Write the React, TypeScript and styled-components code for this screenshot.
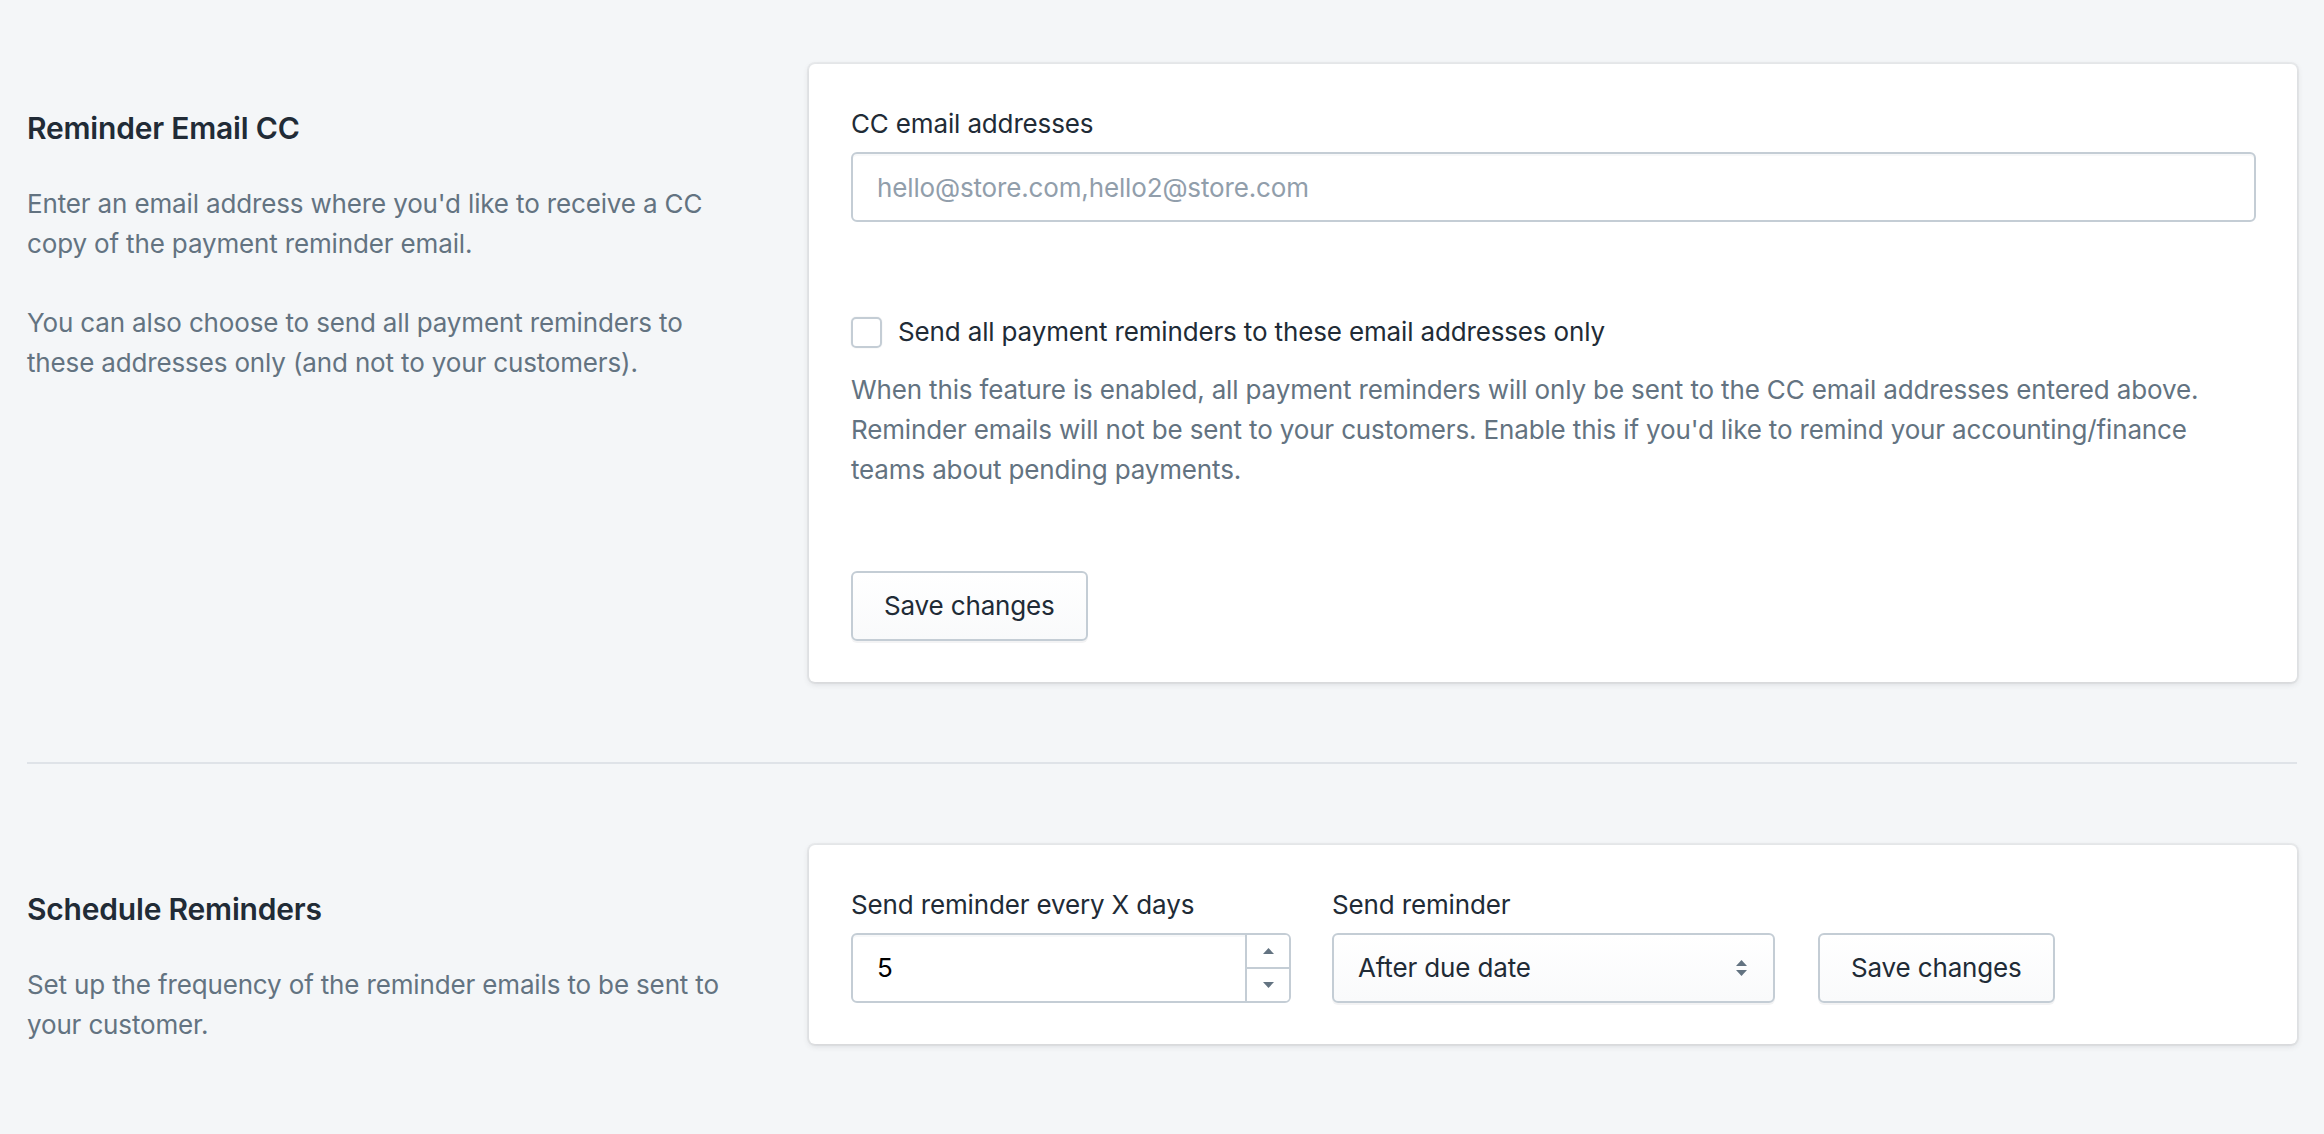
import React from "react";
import styled, { createGlobalStyle } from "styled-components";

const GlobalStyle = createGlobalStyle`
  html, body {
    margin: 0;
    padding: 0;
    background: #f4f6f8;
  }
  body {
    font-family: Inter, "Noto Sans", sans-serif;
    color: #212b36;
    -webkit-font-smoothing: antialiased;
  }
  * { box-sizing: border-box; }
`;

const bodyText = `
  font-size: 26px;
  line-height: 40px;
  letter-spacing: -0.15px;
`;

const Page = styled.div`
  padding: 64px 27px 40px;
  min-height: 1134px;
`;

const Section = styled.section`
  display: grid;
  grid-template-columns: 742px 1fr;
  column-gap: 40px;
  align-items: start;
`;

const Annotation = styled.div`
  padding: 41px 30px 0 0;
`;

const Heading = styled.h2`
  margin: 0;
  font-size: 30px;
  line-height: 47px;
  font-weight: 600;
  color: #212b36;
  letter-spacing: -0.2px;
`;

const Description = styled.p`
  margin: 32px 0 0;
  ${bodyText}
  color: #637381;
  & + & {
    margin-top: 39px;
  }
`;

const Card = styled.div`
  background: #fff;
  border-radius: 6px;
  box-shadow: 0 0 0 2px rgba(63, 63, 68, 0.05), 0 2px 6px 0 rgba(63, 63, 68, 0.15);
  padding: 40px 41px 41px 42px;
`;

const Label = styled.label`
  display: block;
  ${bodyText}
  color: #212b36;
  margin-bottom: 8px;
`;

const TextInput = styled.input`
  display: block;
  width: 100%;
  height: 70px;
  border: 2px solid #c4cdd5;
  border-radius: 6px;
  padding: 0 24px;
  font-family: inherit;
  ${bodyText}
  color: #000;
  background: #fff;
  box-shadow: inset 0 2px 0 0 rgba(99, 115, 129, 0.05);
  outline: none;
  &::placeholder {
    color: #919eab;
  }
`;

const CheckRow = styled.label`
  display: flex;
  align-items: center;
  gap: 16px;
  margin-top: 90px;
  ${bodyText}
  color: #212b36;
`;

const CheckBox = styled.span`
  width: 31px;
  height: 31px;
  border: 2px solid #c4cdd5;
  border-radius: 5px;
  background: #fff;
  box-shadow: 0 0 0 1px rgba(0, 0, 0, 0.02);
  flex: none;
`;

const HelpText = styled.p`
  margin: 18px 0 0;
  ${bodyText}
  color: #637381;
`;

const Button = styled.button<{ $mt?: number }>`
  display: inline-flex;
  align-items: center;
  justify-content: center;
  height: 70px;
  padding: 0 31px;
  margin-top: ${(p) => p.$mt ?? 0}px;
  border: 2px solid #c4cdd5;
  border-radius: 6px;
  background: linear-gradient(180deg, #fff, #f9fafb);
  box-shadow: 0 2px 0 0 rgba(22, 29, 37, 0.05);
  font-family: inherit;
  ${bodyText}
  color: #212b36;
  flex: none;
`;

const Divider = styled.hr`
  margin: 80px 0 81px;
  border: 0;
  height: 2px;
  background: #dfe3e8;
`;

const FieldRow = styled.div`
  display: flex;
  align-items: flex-end;
  gap: 41px;
`;

const Field = styled.div<{ $w: number }>`
  width: ${(p) => p.$w}px;
  flex: none;
`;

const NumberBox = styled.div`
  display: flex;
  height: 70px;
  border: 2px solid #c4cdd5;
  border-radius: 6px;
  background: #fff;
  overflow: hidden;
  box-shadow: inset 0 2px 0 0 rgba(99, 115, 129, 0.05);
`;

const NumberValue = styled.div`
  flex: 1;
  display: flex;
  align-items: center;
  padding-left: 24px;
  ${bodyText}
  color: #000;
`;

const Spinner = styled.div`
  width: 44px;
  border-left: 2px solid #c4cdd5;
  display: flex;
  flex-direction: column;
`;

const SpinPart = styled.div<{ $top?: boolean }>`
  flex: 1;
  display: flex;
  align-items: center;
  justify-content: center;
  background: #fff;
  ${(p) => (p.$top ? "border-bottom: 2px solid #c4cdd5;" : "")}
`;

const SelectBox = styled.div`
  display: flex;
  align-items: center;
  justify-content: space-between;
  height: 70px;
  padding: 0 26px 0 24px;
  border: 2px solid #c4cdd5;
  border-radius: 6px;
  background: linear-gradient(180deg, #fff, #f9fafb);
  box-shadow: 0 2px 0 0 rgba(22, 29, 37, 0.05);
  ${bodyText}
  color: #212b36;
`;

const ButtonWrap = styled.div`
  margin-left: 2px;
`;

const Tri = ({ up }: { up?: boolean }) => (
  <svg width="11" height="6" viewBox="0 0 11 6">
    <path d={up ? "M0 6 L5.5 0 L11 6 Z" : "M0 0 L5.5 6 L11 0 Z"} fill="#637381" />
  </svg>
);

const CaretUpDown = () => (
  <svg width="11" height="18" viewBox="0 0 11 18">
    <path d="M0 7 L5.5 1 L11 7 Z" fill="#637381" />
    <path d="M0 11 L5.5 17 L11 11 Z" fill="#637381" />
  </svg>
);

export default function App() {
  return (
    <>
      <GlobalStyle />
      <Page>
        <Section>
          <Annotation>
            <Heading>Reminder Email CC</Heading>
            <Description>
              Enter an email address where you'd like to receive a CC copy of the payment reminder email.
            </Description>
            <Description>
              You can also choose to send all payment reminders to these addresses only (and not to your customers).
            </Description>
          </Annotation>
          <Card>
            <Label>CC email addresses</Label>
            <TextInput placeholder="hello@store.com,hello2@store.com" />
            <CheckRow>
              <CheckBox />
              Send all payment reminders to these email addresses only
            </CheckRow>
            <HelpText>
              When this feature is enabled, all payment reminders will only be sent to the CC email addresses entered above.
              Reminder emails will not be sent to your customers. Enable this if you'd like to remind your accounting/finance
              teams about pending payments.
            </HelpText>
            <Button $mt={81}>Save changes</Button>
          </Card>
        </Section>
        <Divider />
        <Section>
          <Annotation>
            <Heading>Schedule Reminders</Heading>
            <Description>Set up the frequency of the reminder emails to be sent to your customer.</Description>
          </Annotation>
          <Card>
            <FieldRow>
              <Field $w={440}>
                <Label>Send reminder every X days</Label>
                <NumberBox>
                  <NumberValue>5</NumberValue>
                  <Spinner>
                    <SpinPart $top>
                      <Tri up />
                    </SpinPart>
                    <SpinPart>
                      <Tri />
                    </SpinPart>
                  </Spinner>
                </NumberBox>
              </Field>
              <Field $w={443}>
                <Label>Send reminder</Label>
                <SelectBox>
                  <span>After due date</span>
                  <CaretUpDown />
                </SelectBox>
              </Field>
              <ButtonWrap>
                <Button>Save changes</Button>
              </ButtonWrap>
            </FieldRow>
          </Card>
        </Section>
      </Page>
    </>
  );
}
